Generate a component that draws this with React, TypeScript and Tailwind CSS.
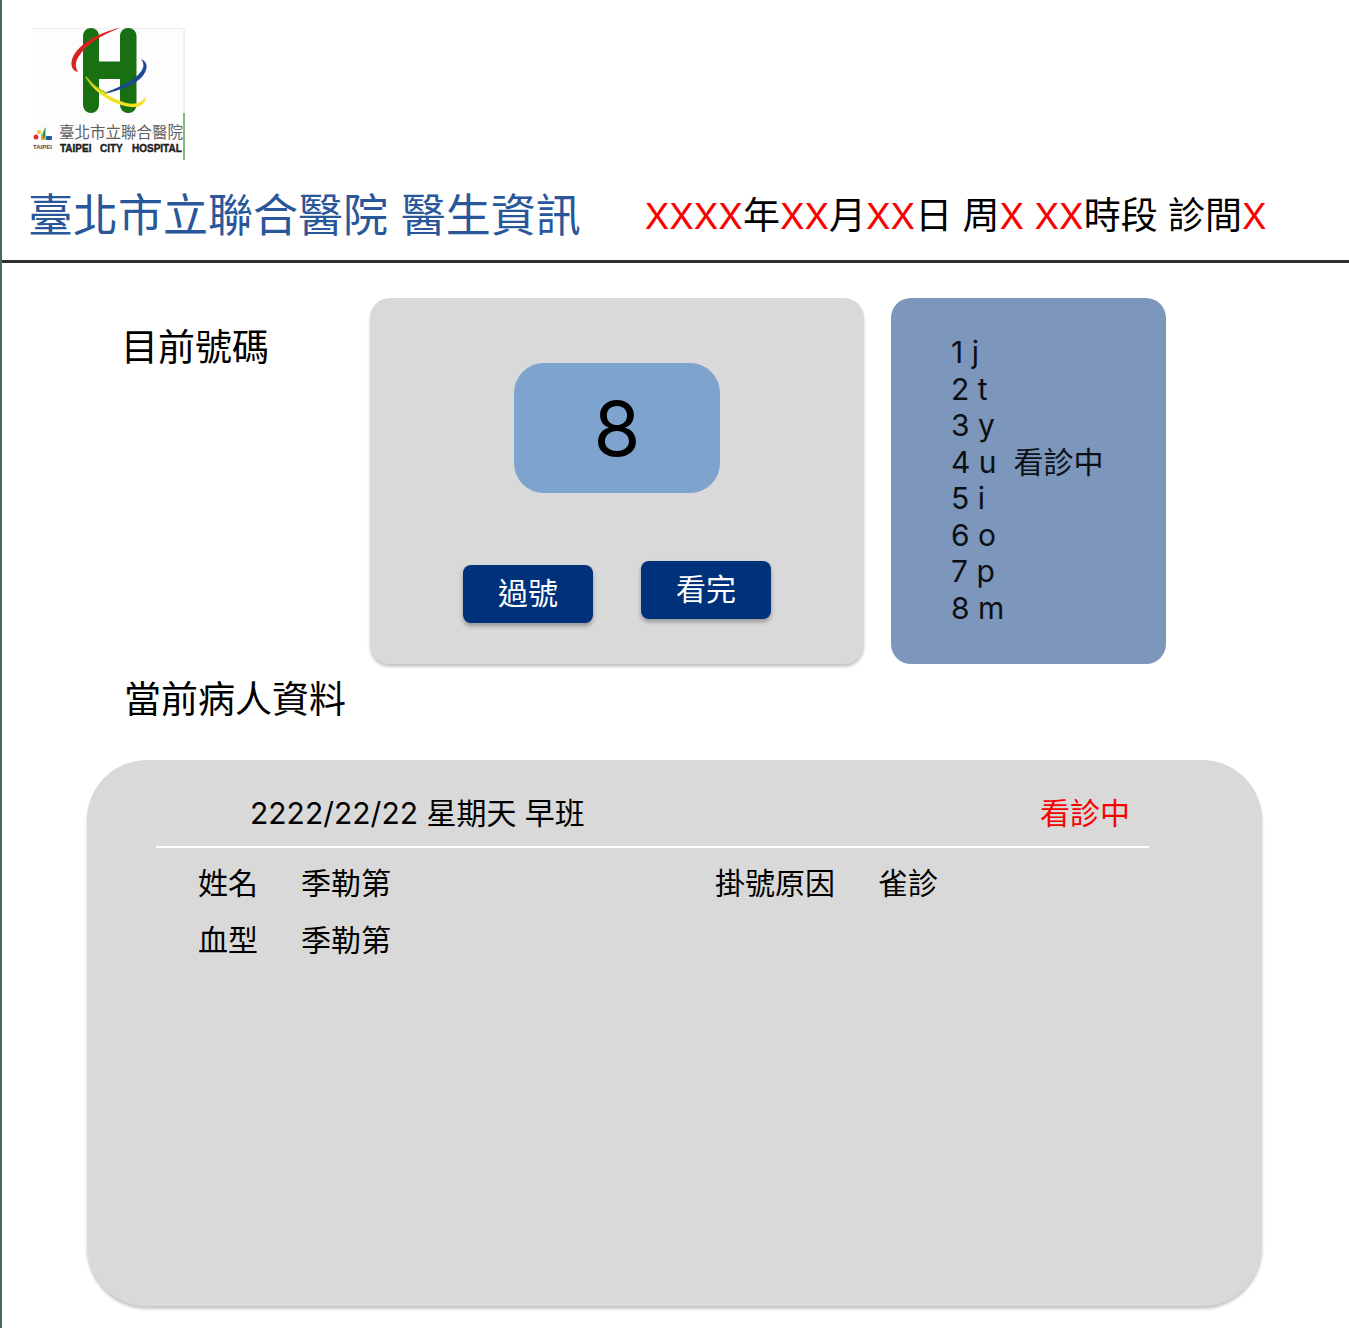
import type { ReactNode } from 'react';

type QueueEntry = { no: number; name: string; status?: string };

const queue: QueueEntry[] = [
  { no: 1, name: 'j' },
  { no: 2, name: 't' },
  { no: 3, name: 'y' },
  { no: 4, name: 'u', status: '看診中' },
  { no: 5, name: 'i' },
  { no: 6, name: 'o' },
  { no: 7, name: 'p' },
  { no: 8, name: 'm' },
];

function HospitalLogo() {
  return (
    <svg viewBox="0 0 152 132" className="block h-[132px] w-[152px]" role="img" aria-label="臺北市立聯合醫院 Taipei City Hospital">
      <rect width="152" height="132" fill="#fdfdfd" />
      <path d="M0 0.5H151" stroke="#ececec" />
      <path d="M151 0V85" stroke="#dff3ee" strokeWidth="1.5" />
      <g fill="#187012">
        <rect x="50" y="0" width="16" height="85" rx="8" />
        <rect x="87" y="0" width="16.5" height="85" rx="8" />
        <rect x="60" y="33.5" width="34" height="17.5" />
      </g>
      <path d="M87 0C66 4 41 18 38.5 34C38 39 40 43 45 44C42 39 42 34 46 28C53 17 68 7 87 0Z" fill="#d5231f" />
      <path d="M108 31C116 34 115 43 108 50C98 59 82 64 67 66.5C82 61 97 55 105 47C111 41 112 36 108 31Z" fill="#1d4795" />
      <path d="M52 48C61 59 76 70 93 75C103 77 109 75 113 68C113 75 108 80 98 79C80 77 60 64 52 48Z" fill="#f3e01e" />
      <path d="M53 49C59 57 66 62 74 65" fill="none" stroke="#a5c522" strokeWidth="1.5" />
      <circle cx="3" cy="109" r="2.5" fill="#d8342c" />
      <circle cx="6" cy="104" r="2" fill="#f2c230" />
      <path d="M13 99C9 104 9 108 10 111L13 110C12 106 12 103 13 99Z" fill="#2d963c" />
      <path d="M8 104L11 112H8Z" fill="#f0a32c" />
      <path d="M12 107L15 112H11Z" fill="#a8cf4a" />
      <rect x="13" y="108" width="6" height="4" rx="1" fill="#20559a" />
      <text x="0" y="121" fontSize="6" fill="#4c4c4c" fontFamily="Liberation Sans, sans-serif" fontWeight="700">TAIPEI</text>
      <text x="26" y="110" fontSize="15.5" fill="#606060" fontFamily="Noto Sans CJK TC, sans-serif">臺北市立聯合醫院</text>
      <g fontSize="10" fill="#222" stroke="#222" strokeWidth="0.4" fontFamily="Liberation Sans, sans-serif" fontWeight="700">
        <text x="27" y="124">TAIPEI</text>
        <text x="67" y="124">CITY</text>
        <text x="99" y="124">HOSPITAL</text>
      </g>
      <path d="M151 85V132" stroke="#5aa555" strokeWidth="1.5" />
    </svg>
  );
}

function Blank({ children }: { children: ReactNode }) {
  return <span className="text-[36px] text-[#fb0000]">{children}</span>;
}

function ActionButton({ children, raised = false }: { children: ReactNode; raised?: boolean }) {
  return (
    <button
      type="button"
      className={`h-[58px] w-[130px] rounded-lg bg-[#00317b] pb-0.5 text-[30px] leading-none text-white shadow-[0_3px_4px_rgba(0,0,0,0.3)] ${raised ? 'mb-1' : ''}`}
    >
      {children}
    </button>
  );
}

function Field({ label, value }: { label: string; value: string }) {
  return (
    <div className="flex gap-[43px]">
      <dt>{label}</dt>
      <dd>{value}</dd>
    </div>
  );
}

export default function App() {
  return (
    <div className="min-h-screen border-l-2 border-[#4f6a53] bg-white pb-[22px] font-['Inter','Noto_Sans_CJK_TC',sans-serif] text-black">
      <header className="border-b-[3px] border-[#2c302d]">
        <div className="pl-[31px] pt-7">
          <HospitalLogo />
        </div>
        <div className="flex items-center pb-[15px] pl-[26px] pt-[27px]">
          <h1 className="whitespace-nowrap text-[45px] leading-[58px] text-[#2a5799]">臺北市立聯合醫院 醫生資訊</h1>
          <p className="ml-16 whitespace-nowrap text-[37px] leading-[58px]">
            <Blank>XXXX</Blank>年<Blank>XX</Blank>月<Blank>XX</Blank>日 周<Blank>X</Blank> <Blank>XX</Blank>時段 診間<Blank>X</Blank>
          </p>
        </div>
      </header>

      <main>
        <section className="grid grid-cols-[222fr_494fr_275fr] gap-x-[27px] pl-[119px] pr-[183px] pt-[35px]">
          <h2 className="pt-[25px] text-[37px] leading-[50px]">目前號碼</h2>
          <div className="flex h-[366px] flex-col items-center rounded-[20px] bg-[#d9d9d9] pt-[65px] shadow-[0_3px_3px_rgba(0,0,0,0.22)]">
            <output className="flex h-[130px] w-[206px] items-center justify-center rounded-[30px] bg-[#7ea3ce] text-[76px] leading-none">
              8
            </output>
            <div className="mt-[68px] flex items-end gap-12">
              <ActionButton>過號</ActionButton>
              <ActionButton raised>看完</ActionButton>
            </div>
          </div>
          <ol className="flex flex-col justify-between rounded-[20px] bg-[#7c96bc] pb-[38px] pl-[60px] pt-9 text-[30px] leading-9 text-[#0c1014]">
            {queue.map((q) => (
              <li key={q.no} className="flex h-9 whitespace-pre">
                <span>{`${q.no} ${q.name}`}</span>
                {q.status && <span className="ml-[17px]">{q.status}</span>}
              </li>
            ))}
          </ol>
        </section>

        <section>
          <h2 className="pl-[122px] pt-[11px] text-[37px] leading-[50px]">當前病人資料</h2>
          <div className="ml-[85px] mr-[87px] mt-[35px] min-h-[546px] rounded-[60px] bg-[#d9d9d9] pl-[69px] pr-[113px] pt-8 text-[30px] leading-[42px] shadow-[0_3px_3px_rgba(0,0,0,0.22)]">
            <div className="flex justify-between border-b-2 border-white pb-3 pl-[94px] pr-[19px]">
              <span>2222/22/22 星期天 早班</span>
              <span className="text-[#fb0000]">看診中</span>
            </div>
            <dl className="grid grid-cols-[517fr_434fr] gap-y-[15px] pl-[42px] pt-[14px]">
              <Field label="姓名" value="季勒第" />
              <Field label="掛號原因" value="雀診" />
              <Field label="血型" value="季勒第" />
            </dl>
          </div>
        </section>
      </main>
    </div>
  );
}
